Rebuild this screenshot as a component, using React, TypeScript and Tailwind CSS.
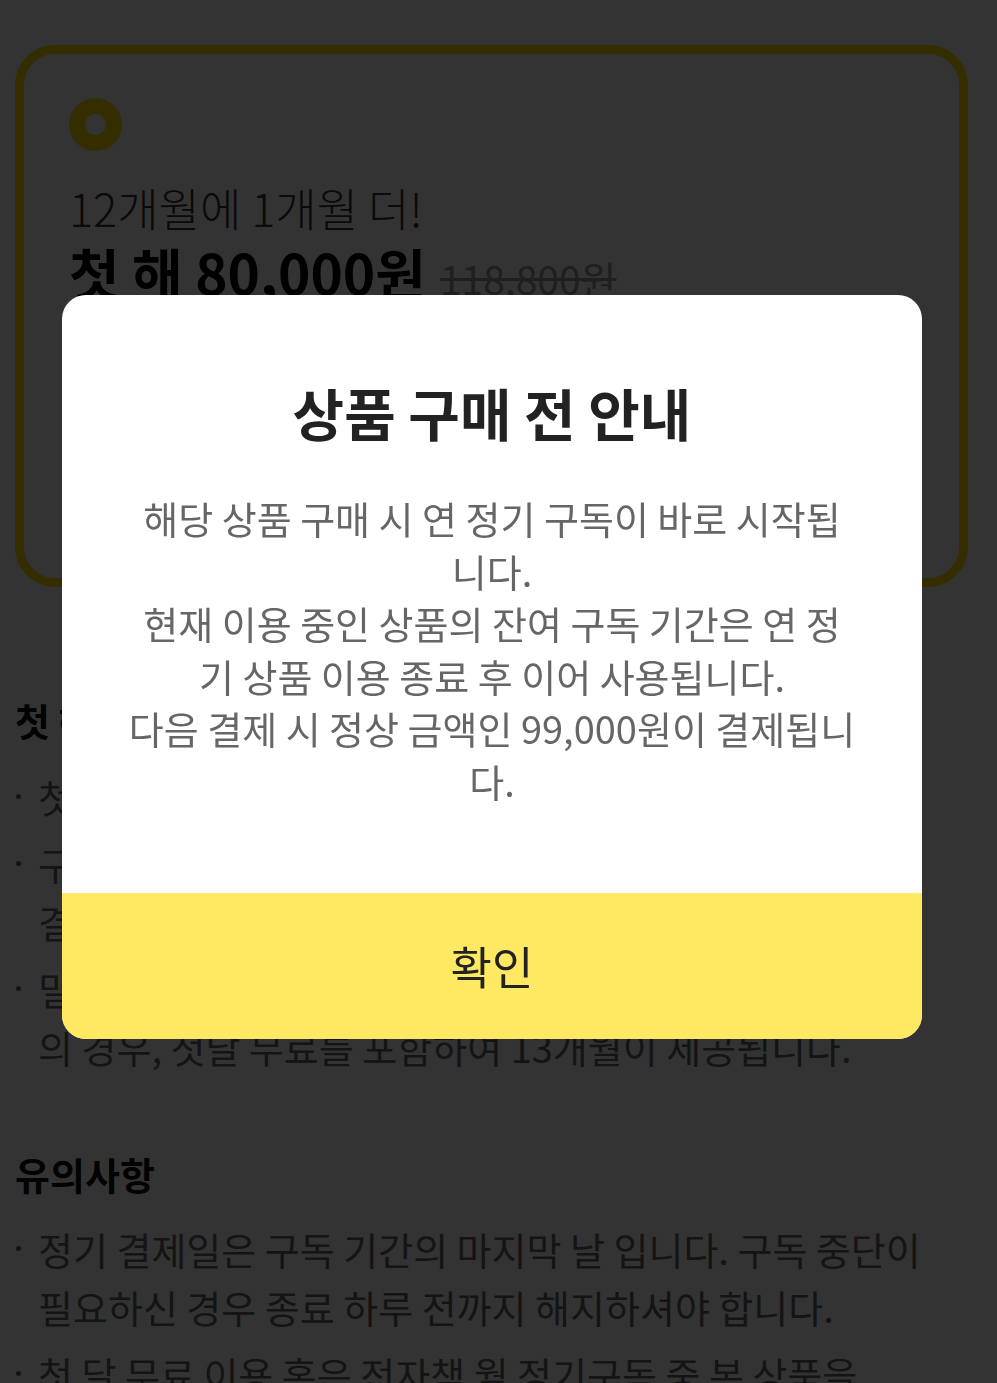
const noticeLines = [
  "해당 상품 구매 시 연 정기 구독이 바로 시작됩",
  "니다.",
  "현재 이용 중인 상품의 잔여 구독 기간은 연 정",
  "기 상품 이용 종료 후 이어 사용됩니다.",
  "다음 결제 시 정상 금액인 99,000원이 결제됩니",
  "다.",
];

const firstYear = [
  ["첫 해 80,000원은 최초 1회 구매 시에만 적용됩니다."],
  ["구독 중 해지하시더라도 남은 기간 동안 이용 가능하며,", "결제일 이후 자동으로 해지됩니다."],
  ["밀리의 서재 첫 구독 회원(첫 달 무료 체험 이력 없는 회원)", "의 경우, 첫달 무료를 포함하여 13개월이 제공됩니다."],
];

const cautions = [
  ["정기 결제일은 구독 기간의 마지막 날 입니다. 구독 중단이", "필요하신 경우 종료 하루 전까지 해지하셔야 합니다."],
  ["첫 달 무료 이용 혹은 전자책 월 정기구독 중 본 상품을", "구매하시면 기존 구독은 자동으로 해지됩니다."],
];

function BulletList({ items }: { items: string[][] }) {
  return (
    <ul className="flex flex-col gap-[9px]">
      {items.map((lines, i) => (
        <li key={i} className="flex">
          <span className="w-[23px] shrink-0 pt-[26px]">
            <span className="block w-[5px] h-[5px] ml-[1px] rounded-full bg-[#666]" />
          </span>
          <div className="text-[38px] leading-[58px] text-[#666]">
            {lines.map((l, j) => (
              <div key={j} className="whitespace-nowrap">{l}</div>
            ))}
          </div>
        </li>
      ))}
    </ul>
  );
}

export default function App() {
  return (
    <div className="relative h-[1383px] bg-white overflow-hidden font-['Noto_Sans_CJK_KR','Noto_Sans',sans-serif]">
      <div className="pl-[15px] pr-[29px] pt-[45px]">
        <div className="h-[542px] rounded-[40px] border-[9px] border-[#ffe100] pl-[45px] pt-[44px]">
          <div className="w-[53px] h-[53px] rounded-full border-[16px] border-[#ffe100]" />
          <div className="mt-[27px] text-[45px] leading-[59px] font-light text-[#333]">12개월에 1개월 더!</div>
          <div className="flex items-baseline gap-[14px]">
            <span className="text-[55px] leading-[68px] font-bold text-black">첫 해 80,000원</span>
            <span className="text-[39px] line-through text-[#999]">118,800원</span>
          </div>
        </div>

        <h2 className="mt-[108px] text-[38px] leading-[50px] font-bold text-[#111]">첫 해 특별가 안내</h2>
        <div className="mt-[23px]">
          <BulletList items={firstYear} />
        </div>

        <h2 className="mt-[73px] text-[38px] leading-[50px] font-bold text-[#111]">유의사항</h2>
        <div className="mt-[21px]">
          <BulletList items={cautions} />
        </div>
      </div>

      <div className="fixed inset-0 bg-black/80 pl-[62px] pt-[295px]">
        <div className="w-[860px] rounded-[24px] bg-white overflow-hidden">
          <h1 className="pt-[79px] text-center text-[56px] leading-[75px] font-bold text-[#222]">상품 구매 전 안내</h1>
          <div className="mt-[43px] pb-[86px] text-center text-[38px] leading-[52.5px] text-[#666]">
            {noticeLines.map((l, i) => (
              <div key={i} className="whitespace-nowrap">{l}</div>
            ))}
          </div>
          <button className="block w-full h-[146px] bg-[#ffe962] text-[45px] text-[#222]">확인</button>
        </div>
      </div>
    </div>
  );
}
